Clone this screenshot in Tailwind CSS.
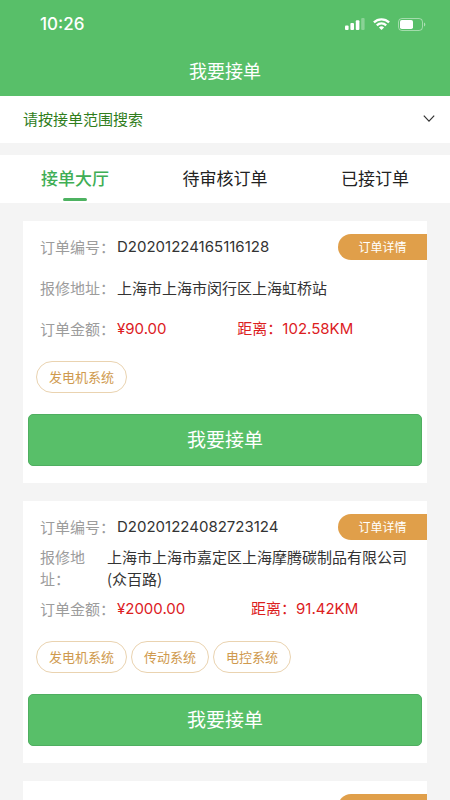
<!DOCTYPE html>
<html lang="zh-CN">
<head>
<meta charset="utf-8">
<meta name="viewport" content="width=device-width, initial-scale=1">
<title>我要接单</title>
<script src="https://cdn.jsdelivr.net/npm/@tailwindcss/browser@4"></script>
</head>
<body class="h-screen overflow-hidden bg-[#f4f4f4] font-['Noto_Sans_CJK_SC',sans-serif] text-[15px] leading-[22px] text-[#333]">
  <header class="bg-[#58bf69] text-white">
    <div class="flex h-12 items-center justify-between pr-6 pl-10">
      <span class="font-['Inter',sans-serif] text-[17px] font-medium">10:26</span>
      <div class="flex items-center gap-2">
        <svg class="h-3 w-5" viewBox="0 0 20 12" fill="currentColor" aria-label="信号">
          <rect x="0" y="7.5" width="3.6" height="4.5" rx="1"/>
          <rect x="5.4" y="5" width="3.6" height="7" rx="1"/>
          <rect x="10.8" y="2.3" width="3.6" height="9.7" rx="1"/>
          <rect x="16.2" y="0" width="3.4" height="12" rx="1" opacity=".3"/>
        </svg>
        <svg class="h-3 w-[17px]" viewBox="0 0 17 12" fill="none" stroke="currentColor" stroke-width="2.3" aria-label="无线网络">
          <path d="M.9 4.4a10.9 10.9 0 0 1 15.2 0M3.8 7.3a6.8 6.8 0 0 1 9.4 0"/>
          <path d="M8.5 12 5.9 9.4a3.8 3.8 0 0 1 5.2 0z" fill="currentColor" stroke="none"/>
        </svg>
        <svg class="h-[13px] w-7" viewBox="0 0 28 13" fill="none" aria-label="电池">
          <rect x=".5" y=".5" width="24" height="12" rx="3.4" stroke="currentColor" opacity=".45"/>
          <rect x="2" y="2" width="13" height="9" rx="1.8" fill="currentColor"/>
          <path d="M26 4.5c1.8.6 1.8 3.4 0 4z" fill="currentColor" opacity=".5"/>
        </svg>
      </div>
    </div>
    <h1 class="flex h-12 items-center justify-center pb-1 text-lg">我要接单</h1>
  </header>

  <button type="button" class="flex h-[47px] w-full items-center justify-between bg-white pr-[15px] pb-0.5 pl-[23px] text-left text-[#2f7d1c]">
    请按接单范围搜索
    <svg class="h-3 w-3" viewBox="0 0 12 12" fill="none" stroke="#333" stroke-width="1.2" aria-hidden="true"><path d="M.8 2.7 6 8.2l5.2-5.5"/></svg>
  </button>

  <nav class="mt-3 grid h-12 grid-cols-3 bg-white text-center text-[17px] leading-[46px] text-[#222]">
    <a href="#hall" class="relative font-medium text-[#3fae55]" aria-current="page">接单大厅<span class="absolute bottom-[2px] left-1/2 h-[3px] w-6 -translate-x-1/2 rounded-full bg-[#4db261]"></span></a>
    <a href="#pending">待审核订单</a>
    <a href="#accepted">已接订单</a>
  </nav>

  <main class="flex flex-col gap-[18px] px-[23px] pt-[18px]">
    <article class="relative bg-white px-[5px] pt-[5px] pb-[17px]">
      <button type="button" class="absolute top-[13px] right-0 h-[26px] w-[89px] rounded-l-full bg-[#e09f4a] text-xs text-white">订单详情</button>
      <dl class="pl-3">
        <div class="flex h-[41px] items-center gap-[2px]"><dt class="text-[#9c9c9c]">订单编号：</dt><dd class="font-['Inter',sans-serif]">D20201224165116128</dd></div>
        <div class="flex h-[41px] items-center gap-[2px]"><dt class="text-[#9c9c9c]">报修地址：</dt><dd>上海市上海市闵行区上海虹桥站</dd></div>
        <div class="flex h-[41px] items-center gap-[2px]"><dt class="text-[#9c9c9c]">订单金额：</dt><dd class="font-['Inter',sans-serif] text-[#dc201e]">¥90.00</dd><dd class="flex-1 text-center text-[#dc201e]">距离：<span class="font-['Inter',sans-serif]">102.58KM</span></dd></div>
      </dl>
      <ul class="mt-3 flex gap-1 pl-2 text-[13px] text-[#cf9a4e]">
        <li class="flex h-8 items-center rounded-full border border-[#ead3b0] px-3">发电机系统</li>
      </ul>
      <button type="button" class="mt-[21px] h-[52px] w-full rounded-[5px] border border-[#4fae60] bg-[#58bf69] pb-0.5 text-[19px] text-white">我要接单</button>
    </article>

    <article class="relative bg-white px-[5px] pt-[5px] pb-[17px]">
      <button type="button" class="absolute top-[13px] right-0 h-[26px] w-[89px] rounded-l-full bg-[#e09f4a] text-xs text-white">订单详情</button>
      <dl class="pl-3">
        <div class="flex h-[41px] items-center gap-[2px]"><dt class="text-[#9c9c9c]">订单编号：</dt><dd class="font-['Inter',sans-serif]">D20201224082723124</dd></div>
        <div class="flex h-[41px] items-center"><dt class="w-[67px] shrink-0 pr-4 text-[#9c9c9c]">报修地址：</dt><dd class="flex-1 pr-[5px]">上海市上海市嘉定区上海摩腾碳制品有限公司(众百路)</dd></div>
        <div class="flex h-[41px] items-center gap-[2px]"><dt class="text-[#9c9c9c]">订单金额：</dt><dd class="font-['Inter',sans-serif] text-[#dc201e]">¥2000.00</dd><dd class="flex-1 text-center text-[#dc201e]">距离：<span class="font-['Inter',sans-serif]">91.42KM</span></dd></div>
      </dl>
      <ul class="mt-3 flex gap-1 pl-2 text-[13px] text-[#cf9a4e]">
        <li class="flex h-8 items-center rounded-full border border-[#ead3b0] px-3">发电机系统</li>
        <li class="flex h-8 items-center rounded-full border border-[#ead3b0] px-3">传动系统</li>
        <li class="flex h-8 items-center rounded-full border border-[#ead3b0] px-3">电控系统</li>
      </ul>
      <button type="button" class="mt-[21px] h-[52px] w-full rounded-[5px] border border-[#4fae60] bg-[#58bf69] pb-0.5 text-[19px] text-white">我要接单</button>
    </article>

    <article class="flex justify-end bg-white py-[13px]">
      <button type="button" class="h-[26px] w-[89px] rounded-l-full bg-[#e09f4a] text-xs text-white" aria-label="订单详情"></button>
    </article>
  </main>
</body>
</html>
